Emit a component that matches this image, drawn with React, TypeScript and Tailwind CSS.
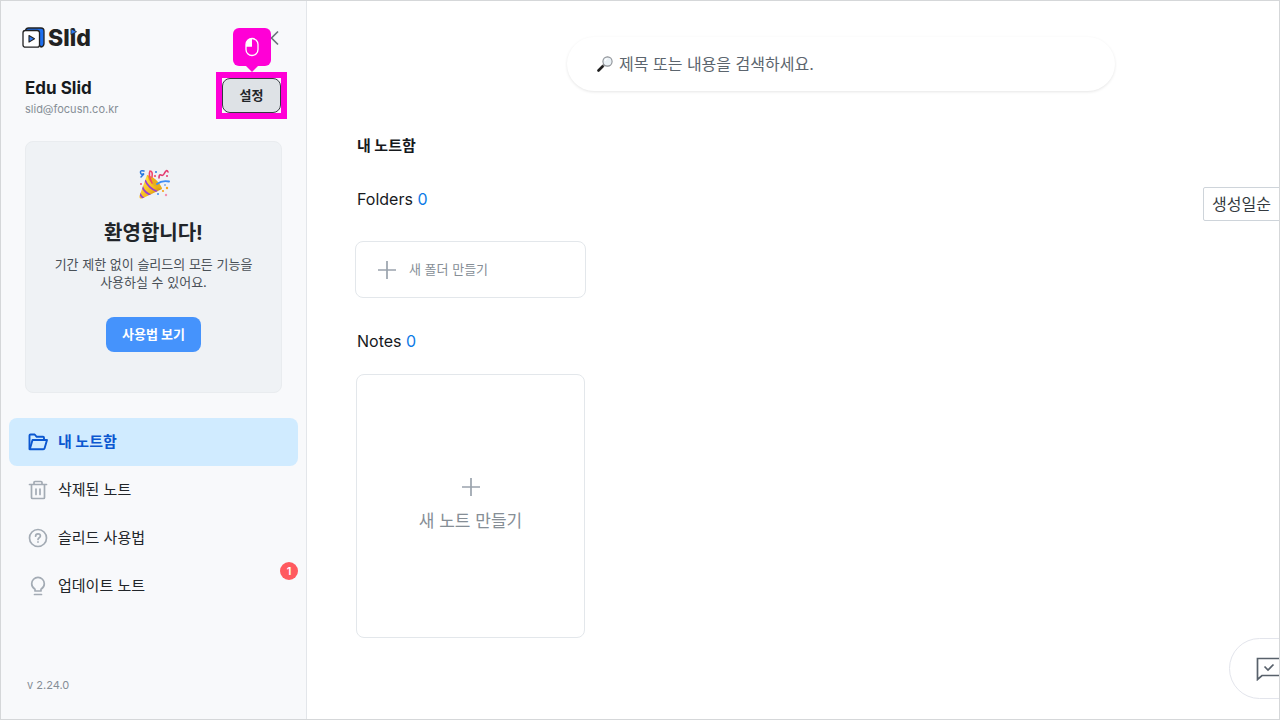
import { useState } from 'react';

const NAV_ITEMS = [
  { id: 'notes', label: '내 노트함' },
  { id: 'trash', label: '삭제된 노트' },
  { id: 'guide', label: '슬리드 사용법' },
  { id: 'updates', label: '업데이트 노트', badge: 1 },
];

function LogoMark() {
  return (
    <svg className="h-6 w-6" viewBox="0 0 24 24" fill="none" aria-hidden="true">
      <path d="M3.500 4.500Q4 2 6.500 2H19q3 0 3 3v12.500q0 3-3 3.500z" fill="#1f6fee" stroke="#222" strokeWidth="1.300" strokeLinejoin="round" />
      <rect x="1" y="4.500" width="16.500" height="16.700" rx="2.300" fill="#fff" stroke="#222" strokeWidth="1.300" />
      <path d="M7 9.500v6.600l5.500-3.300z" fill="#2f7cf6" stroke="#222" strokeWidth="1.100" strokeLinejoin="round" />
    </svg>
  );
}

function PartyIcon() {
  return (
    <svg className="h-8 w-8" viewBox="0 0 32 32" fill="none" aria-hidden="true">
      <defs>
        <linearGradient id="cone" x1="6" y1="12" x2="20" y2="26" gradientUnits="userSpaceOnUse">
          <stop stopColor="#ffdc3c" />
          <stop offset="0.6" stopColor="#f5b81c" />
          <stop offset="1" stopColor="#c98a10" />
        </linearGradient>
        <clipPath id="coneClip">
          <path d="M9 6 1.500 27q-.5 3 2.500 2.500L24 20Q19 9 9 6z" />
        </clipPath>
      </defs>
      <path d="M9 6 1.500 27q-.5 3 2.500 2.500L24 20Q19 9 9 6z" fill="url(#cone)" />
      <g clipPath="url(#coneClip)" stroke="#9a3fd0" strokeWidth="1.800">
        <path d="M7 11q3 8 13 12" />
        <path d="M4 17q2 7 11 10" />
        <path d="M1 23q2 5 6 7" />
      </g>
      <path d="M9 6q7 2 11 7t4 7q-6-1-10-5T9 6z" fill="#e8ae1c" />
      <path d="M14 14q-4-8-2-12 3 0 2 6" stroke="#f2456b" strokeWidth="1.600" strokeLinecap="round" />
      <path d="M19 15q5-4 12-2.500" stroke="#3d8df5" strokeWidth="1.900" strokeLinecap="round" />
      <path d="M6 2Q2 1 2.500 3.500T5 5 3 8" stroke="#2878e0" strokeWidth="1.500" strokeLinecap="round" />
      <path d="M21 9q0-4 2-3t3-1 2-3 2 1" stroke="#e33b6f" strokeWidth="1.600" strokeLinecap="round" />
      <circle cx="18" cy="3" r="1" fill="#2878e0" />
      <circle cx="17" cy="7" r="1.100" fill="#ef476f" />
      <circle cx="29" cy="7" r="1" fill="#e33b6f" />
      <circle cx="3" cy="15" r="1" fill="#ef476f" />
      <circle cx="29" cy="19" r="1.200" fill="#f6a21c" />
      <circle cx="25" cy="22" r="1.100" fill="#f6a21c" />
      <circle cx="20" cy="25" r="1" fill="#3d8df5" />
      <circle cx="28" cy="26" r="1.200" fill="#f48fb1" />
      <circle cx="27" cy="16" r=".8" fill="#2878e0" />
    </svg>
  );
}

function SearchIcon() {
  return (
    <svg className="h-4 w-4 shrink-0" viewBox="0 0 16 16" fill="none" aria-hidden="true">
      <path d="m1.500 14.500 4.500-4.500" stroke="#1e1e1e" strokeWidth="2.600" strokeLinecap="round" />
      <path d="m6 10 1.500-1.500" stroke="#777" strokeWidth="1.500" />
      <circle cx="10.500" cy="5.500" r="4.600" fill="#eaf1f6" stroke="#8b8f94" strokeWidth="1.100" />
      <path d="M8 5q.5-2 2.500-2.500" stroke="#fff" strokeWidth="1.200" />
    </svg>
  );
}

function NavIcon({ id }: { id: string }) {
  const props = {
    className: 'h-5 w-5 shrink-0',
    viewBox: '0 0 20 20',
    fill: 'none',
    stroke: 'currentColor',
    strokeWidth: 1.7,
    strokeLinecap: 'round' as const,
    strokeLinejoin: 'round' as const,
    'aria-hidden': true,
  };

  if (id === 'notes') {
    return (
      <svg {...props} strokeWidth={1.9}>
        <path d="M1.500 17V3.500q0-1 1-1h4.200l2 2.300H15q1 0 1 1V8" />
        <path d="M1.800 17.300 4.500 8H19l-2.400 8.300q-.3 1-1.300 1z" />
      </svg>
    );
  }
  if (id === 'trash') {
    return (
      <svg {...props}>
        <path d="M1.500 4.500h17M6 4.300V2.500q0-1 1-1h6q1 0 1 1v1.800M3.500 4.800v12.700q0 1 1 1h11q1 0 1-1V4.800M8 9v5.500M12 9v5.500" />
      </svg>
    );
  }
  if (id === 'guide') {
    return (
      <svg {...props}>
        <circle cx="10" cy="10" r="8.500" />
        <path d="M7.600 8.200q0-2.400 2.400-2.400t2.400 2.200c0 1.700-2.400 1.700-2.400 3.500M10 13.900v.2" />
      </svg>
    );
  }
  return (
    <svg {...props}>
      <path d="M7 15v-1.800q-3.300-2-3.300-5.500a6.300 6.300 0 0 1 12.600 0q0 3.500-3.300 5.500V15zM6.500 18.500h7" />
    </svg>
  );
}

function PlusIcon() {
  return (
    <svg className="h-5 w-5 shrink-0 text-[#9aa3ad]" viewBox="0 0 20 20" fill="none" aria-hidden="true">
      <path d="M10 1v18M1 10h18" stroke="currentColor" strokeWidth="1.700" />
    </svg>
  );
}

function Sidebar() {
  const [active, setActive] = useState('notes');

  return (
    <aside className="flex w-[306px] shrink-0 flex-col border-r border-[#e3e6ea] bg-[#f8f9fb]">
      <div className="flex items-center justify-between pt-[25px] pr-6 pl-[21px]">
        <a href="#" className="flex items-center gap-0.5 text-[#222]">
          <LogoMark />
          <span className="relative text-[23px] leading-6 font-extrabold">
            Slid
            <svg className="absolute top-0.5 left-[22px] h-2 w-2" viewBox="0 0 8 8" aria-hidden="true">
              <path d="M1 .7v6L6.500 3.700z" fill="#2f7cf6" stroke="#222" strokeWidth=".8" />
            </svg>
          </span>
        </a>
        <button type="button" aria-label="사이드바 닫기" className="text-[#6b737c]">
          <svg className="h-4 w-4" viewBox="0 0 16 16" fill="none" aria-hidden="true">
            <path d="M12 1.500 5.500 8l6.500 6.500" stroke="currentColor" strokeWidth="1.700" />
          </svg>
        </button>
      </div>

      <div className="mt-7 flex items-start justify-between pr-[25px] pl-6">
        <div>
          <p className="text-[17px] leading-5 font-bold text-[#16191d]">Edu Slid</p>
          <p className="mt-px text-[11px] leading-5 text-[#868e96]">slid@focusn.co.kr</p>
        </div>
        <div className="relative">
          <button
            type="button"
            className="block h-[35px] w-[59px] rounded-lg border border-[#343a40] bg-[#dee2e6] text-[13px] font-bold text-[#212529]"
          >
            설정
          </button>
          <div className="pointer-events-none absolute -inset-1.5 border-[6px] border-[#ff00d6]" />
          <div className="pointer-events-none absolute bottom-full left-1/2 mb-1.5 flex -translate-x-1/2 flex-col items-center">
            <div className="flex h-[38px] w-[38px] items-center justify-center rounded-md bg-[#ff00d6]">
              <svg className="h-5 w-5" viewBox="0 0 20 20" fill="none" aria-hidden="true">
                <path d="M10 1.500Q4 1.500 4 8v1.800h6z" fill="#fff" />
                <rect x="4" y="1.500" width="12" height="17" rx="6" stroke="#fff" strokeWidth="1.300" />
              </svg>
            </div>
            <svg className="h-1.5 w-3" viewBox="0 0 12 6" aria-hidden="true">
              <path d="M0 0h12L6 6z" fill="#ff00d6" />
            </svg>
          </div>
        </div>
      </div>

      <section className="mx-6 mt-[22px] flex h-[252px] flex-col items-center rounded-lg border border-[#e9ecef] bg-[#eff2f5] pt-[27px] text-center">
        <PartyIcon />
        <h2 className="mt-4 text-xl leading-8 font-bold text-[#212529]">환영합니다!</h2>
        <p className="mt-1.5 text-[13px] leading-[18px] text-[#495057]">
          기간 제한 없이 슬리드의 모든 기능을
          <br />
          사용하실 수 있어요.
        </p>
        <button type="button" className="mt-[26px] h-[35px] rounded-lg bg-[#4593fc] px-4 text-[13px] font-bold text-white">
          사용법 보기
        </button>
      </section>

      <nav className="mx-2 mt-[25px] flex flex-col">
        {NAV_ITEMS.map((item) => (
          <button
            key={item.id}
            type="button"
            onClick={() => setActive(item.id)}
            className={`relative flex h-12 items-center gap-2.5 rounded-lg pl-[19px] text-[15px] ${
              active === item.id ? 'bg-[#d0ebff] font-bold text-[#0b57d0]' : 'text-[#212529]'
            }`}
          >
            <span className={active === item.id ? 'text-[#0b57d0]' : 'text-[#a3abb4]'}>
              <NavIcon id={item.id} />
            </span>
            {item.label}
            {item.badge && (
              <span className="absolute top-0 right-0 flex h-[18px] w-[18px] items-center justify-center rounded-full bg-[#ff5a5f] text-[11px] font-semibold text-white">
                {item.badge}
              </span>
            )}
          </button>
        ))}
      </nav>

      <p className="mt-auto pb-6 pl-[26px] text-[11px] leading-5 text-[#868e96]">v 2.24.0</p>
    </aside>
  );
}

export default function App() {
  const [query, setQuery] = useState('');

  return (
    <div className="flex min-h-screen border border-[#d5d7d9] bg-white font-['Inter','Noto_Sans_CJK_KR',sans-serif] text-[#16191d]">
      <Sidebar />

      <main className="relative min-w-0 flex-1 overflow-hidden">
        {/* content runs on past the right edge of the window */}
        <div className="-mr-24 pt-9 pr-12 pl-12">
          <label className="mx-auto flex h-[54px] max-w-[548px] items-center gap-1.5 rounded-full px-[30px] shadow-[0_1px_3px_rgba(0,0,0,0.1)]">
            <SearchIcon />
            <input
              type="text"
              aria-label="검색"
              value={query}
              onChange={(e) => setQuery(e.target.value)}
              placeholder="제목 또는 내용을 검색하세요."
              className="min-w-0 flex-1 bg-transparent text-base outline-none placeholder:text-[#5c656e]"
            />
          </label>

          <h1 className="mt-[43px] pl-0.5 text-[15px] leading-6 font-bold">내 노트함</h1>

          <div className="mt-[29px] flex items-start justify-between pl-0.5">
            <h2 className="text-base leading-6">
              Folders <span className="text-[#0c7ae6]">0</span>
            </h2>
            <select
              aria-label="정렬"
              className="h-[34px] w-[124px] appearance-none rounded-xs border border-[#ced4da] bg-white px-2 text-base text-[#343a40]"
            >
              <option>생성일순</option>
            </select>
          </div>
          <button
            type="button"
            className="mt-5 flex h-[57px] w-[231px] items-center gap-3 rounded-lg border border-[#e3e7eb] pl-[21px] text-[13px] text-[#868e96]"
          >
            <PlusIcon />
            새 폴더 만들기
          </button>

          <h2 className="mt-[31px] pl-0.5 text-base leading-6">
            Notes <span className="text-[#0c7ae6]">0</span>
          </h2>
          <button
            type="button"
            className="mt-[21px] ml-px flex h-[264px] w-[229px] flex-col items-center justify-center gap-3 rounded-lg border border-[#e3e7eb] text-[17px] text-[#868e96]"
          >
            <PlusIcon />
            새 노트 만들기
          </button>
        </div>

        <button
          type="button"
          aria-label="문의하기"
          className="absolute -right-12 bottom-5 flex h-[61px] w-[98px] items-center rounded-full border border-[#e3e5ec] bg-white pl-[26px] text-[#58616b]"
        >
          <svg className="h-6 w-7" viewBox="0 0 28 24" fill="none" stroke="currentColor" strokeWidth="1.700" aria-hidden="true">
            <path d="M1.500 1.500h25v17H6l-4.500 4z" />
            <path d="m8.500 9.500 3.500 3.500 5.500-5.500" />
          </svg>
        </button>
      </main>
    </div>
  );
}
